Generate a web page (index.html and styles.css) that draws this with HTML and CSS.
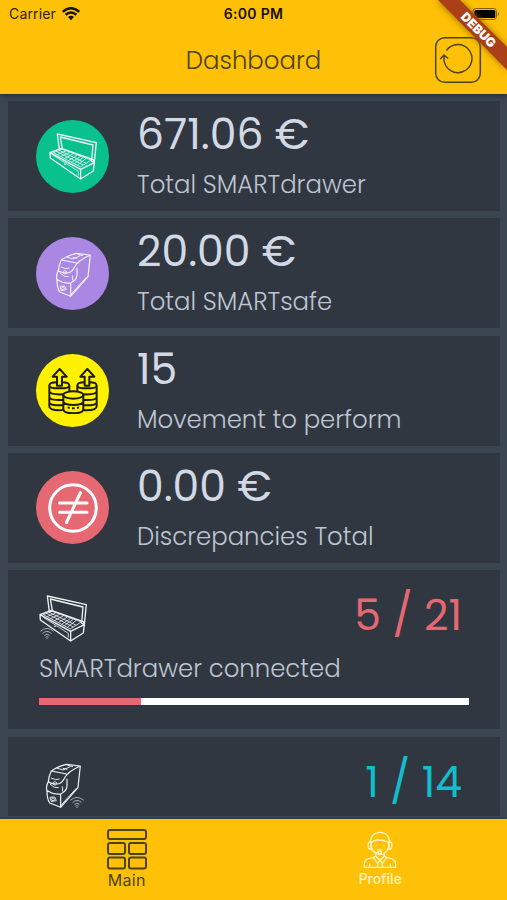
FILE: index.html
```html
<!doctype html>
<html lang="en">
    <head>
        <title>Dashboard</title>
        <meta charset="utf-8">
        <meta name="viewport" content="width=device-width, initial-scale=1">
        <link rel="stylesheet" href="styles.css">
    </head>
    <body>
        <!-- shared icons -->
        <svg class="defs" width="0" height="0">
            <symbol id="drawer" viewBox="110 80 160 160">
                <path d="M144 95L261 121L255 182L247 176L251 128L153 104L159 138L150 141Z" stroke-width="4"/>
                <path d="M122 151L156 138L252 172L255 181L214 201ZM122 151L123 167L214 230V201M214 230L252 206L255 181" stroke-width="4"/>
                <path d="M132 151L158 141L246 173L213 194ZM141 147L222 188M149 144L231 183M143 157L169 146M154 163L181 150M165 169L193 154M177 175L204 158M187 180L214 162M195 184L222 165M204 189L231 168M132 159L207 207V220" stroke-width="2.4"/>
                <circle cx="167" cy="186" r="2" stroke-width="2"/>
            </symbol>
            <symbol id="safe" viewBox="110 80 160 160">
                <path d="M156 119Q174 106 201 99L243 104Q205 120 194 143Q186 158 172 158Q155 157 147 151Q149 132 156 119L202 128M147 151Q139 165 143 180Q143 203 151 215L184 228L236 169L243 104M184 228V188Q202 180 203 165V142M144 178Q164 191 184 188" stroke-width="3.6"/>
                <path d="M155 140Q168 148 181 143M172 110L191 116L213 106M190 111L204 114M205 102L221 106M152 158Q164 172 178 169M152 198L166 197L171 208L156 211ZM185 222L231 171M189 165L190 181" stroke-width="2.8"/>
                <circle cx="167" cy="156" r="5" stroke-width="2.5"/>
                <circle cx="161" cy="204" r="4" stroke-width="2.5"/>
            </symbol>
            <symbol id="wifi" viewBox="0 0 44 34">
                <path d="M1 10Q22-8 43 10M8 17Q22 4 36 17M14 23Q22 15 30 23" stroke-width="3"/>
                <circle cx="22" cy="29" r="3.5" stroke-width="2"/>
            </symbol>
        </svg>

        <header class="topbar">
            <div class="status">
                <div class="carrier">
                    <span>Carrier</span>
                    <svg width="18" height="14" viewBox="0 0 18 14">
                        <path d="M.8 4.8Q9-2.4 17.2 4.8M3.6 7.8Q9 3.2 14.4 7.8" fill="none" stroke="#171000" stroke-width="2.5"/>
                        <path d="M6 10Q9 7.4 12 10L9 13.2Z" fill="#171000"/>
                    </svg>
                </div>
                <div class="clock">6:00 PM</div>
                <svg class="battery" width="28" height="12" viewBox="0 0 28 12">
                    <rect x="1" y=".5" width="23.5" height="11" rx="3" fill="none" stroke="#806000"/>
                    <rect x="2.3" y="2" width="21" height="8" rx="1.5" fill="#000"/>
                    <path d="M26 4Q28 6 26 8Z" fill="#806000"/>
                </svg>
            </div>
            <div class="titlebar">
                <h1>Dashboard</h1>
                <svg class="refresh" width="48" height="48" viewBox="0 0 48 48">
                    <rect x="1.7" y="1.7" width="44.6" height="44.6" rx="9"/>
                    <path d="M12.5 14.5A14 14 0 1 1 10 24V20M6.2 23L10 19L14 22.5"/>
                </svg>
            </div>
            <svg class="banner" width="80" height="80" viewBox="0 0 80 80">
                <path class="shade" d="M9 0H34L80 46V71Z"/>
                <path d="M11 0H33L80 47V70Z" fill="#ab3f17"/>
                <text x="0" y="0" transform="translate(51.3 30) rotate(45)" dy="4.2">DEBUG</text>
            </svg>
        </header>

        <main>
            <section class="card total">
                <div class="badge green"><svg class="device"><use href="#drawer"/></svg></div>
                <div class="info">
                    <div class="value">671.06 €</div>
                    <div class="label">Total SMARTdrawer</div>
                </div>
            </section>
            <section class="card total">
                <div class="badge purple"><svg class="device"><use href="#safe"/></svg></div>
                <div class="info">
                    <div class="value">20.00 €</div>
                    <div class="label">Total SMARTsafe</div>
                </div>
            </section>
            <section class="card total">
                <div class="badge yellow">
                    <svg class="coins" width="50" height="46" viewBox="0 0 150 138">
                        <path d="M4 51V115Q4 127 34 127Q42 127 47 125M4 53Q4 61 34 61Q64 61 64 53M4 53Q4 43 27 43M41 43Q64 43 64 53V69M4 71Q9 81 47 79M4 88Q9 98 46 96M4 105Q9 113 46 112"/>
                        <path d="M146 51V115Q146 127 116 127Q111 127 106 126M146 53Q146 61 116 61Q88 61 88 53M88 69V53Q88 43 110 43M124 43Q146 43 146 53M146 71Q141 81 107 79M146 88Q141 98 108 96M146 105Q141 113 108 112"/>
                        <ellipse cx="76" cy="81" rx="30" ry="11"/>
                        <path d="M46 81V123Q46 136 76 136Q106 136 106 123V81M46 101Q50 111 76 111Q102 111 106 101M59 118L65 120M72 121H80M87 120L93 118"/>
                        <path d="M27 53V26H14L35 3L56 26H42V53ZM110 53V26H97L118 3L139 26H124V53Z"/>
                    </svg>
                </div>
                <div class="info">
                    <div class="value">15</div>
                    <div class="label">Movement to perform</div>
                </div>
            </section>
            <section class="card total">
                <div class="badge red">
                    <svg class="unequal" width="50" height="50" viewBox="0 0 50 50">
                        <circle cx="25" cy="25" r="23.3"/>
                        <path d="M11.5 20H39M11.5 29.3H39M32.5 9.5L18.5 39.5"/>
                    </svg>
                </div>
                <div class="info">
                    <div class="value">0.00 €</div>
                    <div class="label">Discrepancies Total</div>
                </div>
            </section>
            <section class="card connected">
                <div class="row">
                    <div class="device-wrap"><svg class="device"><use href="#drawer"/></svg><svg class="wifi left"><use href="#wifi"/></svg></div>
                    <div class="count lost">5 / 21</div>
                </div>
                <div class="label">SMARTdrawer connected</div>
                <div class="progress"><div class="bar" style="width: 23.8%"></div></div>
            </section>
            <section class="card connected last">
                <div class="row">
                    <div class="device-wrap"><svg class="device"><use href="#safe"/></svg><svg class="wifi right"><use href="#wifi"/></svg></div>
                    <div class="count online">1 / 14</div>
                </div>
            </section>
        </main>

        <nav>
            <div class="tab main-tab">
                <svg width="42" height="42" viewBox="0 0 42 42">
                    <rect x="2" y="2" width="38" height="9" rx="2"/>
                    <rect x="2" y="15" width="17" height="11" rx="2"/>
                    <rect x="23" y="15" width="17" height="11" rx="2"/>
                    <rect x="2" y="29.5" width="17" height="11" rx="2"/>
                    <rect x="23" y="29.5" width="17" height="11" rx="2"/>
                </svg>
                <span>Main</span>
            </div>
            <div class="tab profile-tab">
                <svg width="34" height="38" viewBox="0 0 102 114">
                    <path d="M22 33Q25 4 51 4Q77 4 80 33M25 34Q38 26 49 27Q60 27 67 31L77 34M25 34V47Q28 60 41 69Q51 73 61 69Q75 60 77 47V34"/>
                    <path d="M24 32Q15 32 15 43Q15 55 24 55ZM78 32Q87 32 87 43Q87 55 78 55ZM25 54Q30 65 47 65M45 61H55V68H47Z"/>
                    <path d="M38 68V76L51 88L64 76V68M38 75L31 80Q4 82 4 99V109H98V99Q98 82 71 80L64 75M31 80L44 97L51 88L58 97L71 80M46 96L43 109M56 96L59 109M20 98V109M82 98V109"/>
                    <path d="M39 42V45M63 42V45M43 54Q51 60 59 54"/>
                </svg>
                <span>Profile</span>
            </div>
        </nav>
    </body>
</html>
```
FILE: styles.css
```css
* {
    box-sizing: border-box;
}
body {
    margin: 0;
    height: 900px;
    display: flex;
    flex-direction: column;
    overflow: hidden;
    background: #3c4650;
    font-family: Poppins, Inter, sans-serif;
    font-weight: 300;
    color: #d2d9e5;
}
.defs {
    position: absolute;
}
svg {
    display: block;
    flex: none;
}

/* header */
.topbar {
    position: relative;
    z-index: 1;
    height: 94px;
    flex: none;
    background: #ffc107;
    box-shadow: 0 1px 5px rgba(0, 0, 0, .5);
}
.status {
    display: grid;
    grid-template-columns: 1fr auto 1fr;
    align-items: center;
    height: 27px;
    padding: 0 7px 0 9px;
    font: 400 14px/27px Inter, sans-serif;
    color: #2b2200;
}
.carrier {
    display: flex;
    align-items: center;
    gap: 6px;
    letter-spacing: .15px;
}
.clock {
    position: relative;
    left: -1px;
    font-weight: 600;
    letter-spacing: .3px;
    color: #171000;
}
.battery {
    position: relative;
    justify-self: end;
}
.titlebar {
    display: grid;
    grid-template-columns: 1fr auto 1fr;
    align-items: center;
    height: 65px;
    padding: 0 25px;
}
h1 {
    grid-column: 2;
    margin: 2px 0 0;
    font-size: 24.4px;
    font-weight: 300;
    color: #4c430f;
}
.refresh {
    justify-self: end;
    fill: none;
    stroke: #4c430f;
    stroke-width: 1.5;
}
.banner {
    position: absolute;
    top: 0;
    right: 0;
}
.banner .shade {
    fill: #8a6500;
    opacity: .7;
    filter: blur(3px);
}
.banner text {
    font: 900 12.5px Inter, sans-serif;
    fill: #fff;
    text-anchor: middle;
}

/* cards */
main {
    flex: 1;
    min-height: 0;
    overflow: hidden;
    padding: 7px 7px 0 8px;
    display: flex;
    flex-direction: column;
    gap: 7.3px;
}
.card {
    flex: none;
    background: #303740;
}
.total {
    display: flex;
    align-items: center;
    gap: 28px;
    height: 110px;
    padding-left: 28px;
}
.badge {
    display: flex;
    align-items: center;
    justify-content: center;
    width: 73px;
    height: 73px;
    border-radius: 50%;
}
.green {
    background: #08c18d;
}
.purple {
    background: #aa87e2;
}
.yellow {
    background: #fff100;
}
.red {
    background: #e66873;
}
.device {
    width: 53.3px;
    height: 53.3px;
    fill: none;
    stroke: #f0f4f6;
    stroke-linejoin: round;
}
.coins {
    fill: none;
    stroke: #1c1c08;
    stroke-width: 6;
    stroke-linejoin: round;
}
.unequal {
    fill: none;
    stroke: #fff;
    stroke-width: 3;
    stroke-linecap: round;
}
.value {
    height: 56px;
    padding-top: 1px;
    font-size: 42.5px;
    font-weight: 400;
    line-height: 56px;
    white-space: nowrap;
}
.label {
    height: 46px;
    padding-top: 1px;
    font-size: 24.4px;
    line-height: 46px;
    color: #bec5d2;
    white-space: nowrap;
}
.connected {
    height: 158.5px;
    padding: 20px 31px 0;
}
.last {
    height: 79.5px;
    margin-top: 1px;
}
.row {
    display: flex;
    align-items: flex-start;
    justify-content: space-between;
    height: 55px;
}
.device-wrap {
    position: relative;
    margin: 1px 0 0 -3px;
}
.wifi {
    position: absolute;
    width: 14px;
    height: 11px;
    fill: none;
    stroke: #a9b0b8;
}
.left {
    left: 4px;
    top: 37px;
}
.right {
    left: 34px;
    top: 39px;
}
.count {
    font-size: 42.5px;
    font-weight: 400;
    line-height: 50px;
    margin-right: 7px;
}
.lost {
    color: #e66873;
}
.online {
    color: #10bfcb;
}
.progress {
    height: 7px;
    margin-top: 7px;
    background: #fff;
}
.bar {
    height: 100%;
    background: #e66873;
}

/* bottom tabs */
nav {
    display: grid;
    grid-template-columns: 1fr 1fr;
    height: 81px;
    flex: none;
    background: #ffc107;
    box-shadow: 0 0 3px rgba(0, 0, 0, .4);
}
.tab {
    display: flex;
    flex-direction: column;
    align-items: center;
    font-family: Inter, sans-serif;
    font-weight: 400;
}
.tab svg {
    fill: none;
}
.main-tab {
    padding-top: 9px;
    font-size: 16px;
    line-height: 21px;
    letter-spacing: .3px;
    color: #4c430f;
}
.main-tab svg {
    stroke: #4c430f;
    stroke-width: 2;
}
.profile-tab {
    padding-top: 12px;
    font-size: 14px;
    font-weight: 500;
    line-height: 20px;
    color: #fff3c0;
}
.profile-tab svg {
    stroke: #fff3c0;
    stroke-width: 4;
}
```
